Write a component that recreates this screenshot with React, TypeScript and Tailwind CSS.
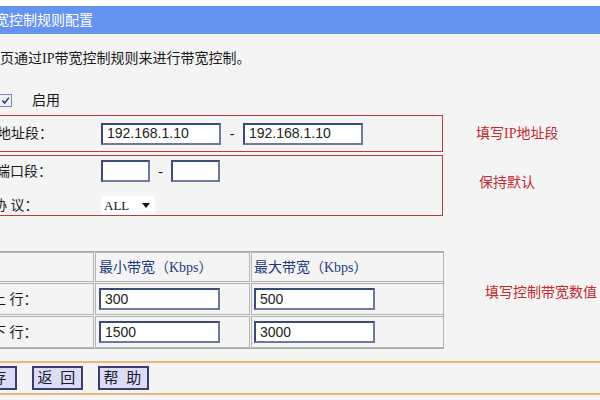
const cjk = "font-['Liberation_Serif','Noto_Sans_CJK_SC',serif]"
const num = "font-['Liberation_Sans','Noto_Sans_CJK_SC',sans-serif]"

function TextBox({ value, className }: { value?: string; className: string }) {
  return (
    <div
      className={`${className} ${num} flex items-center bg-white pl-[4px] text-[14px] text-[#222] border-2 border-t-[#3d4a78] border-l-[#3d4a78] border-b-[#6d7aa0] border-r-[#6d7aa0]`}
    >
      {value}
    </div>
  )
}

function Button({ label, className = '' }: { label: string; className?: string }) {
  return (
    <div
      className={`${className} ${cjk} w-[51px] h-[24px] flex items-center justify-center bg-[#dcdcf6] border-2 border-[#3b3d6c] text-[15px] text-[#1a1a2a] tracking-[2px]`}
    >
      {label}
    </div>
  )
}

export default function App() {
  return (
    <div className={`${cjk} w-[600px] h-[400px] overflow-hidden bg-[#f4f4f4] text-[13px] text-[#1a1a1a]`}>
      <div className="h-[6px] bg-white" />

      {/* Title bar */}
      <div className="h-[28px] bg-[#6594f0] flex items-center">
        <span className="-ml-[19px] text-[14px] text-white whitespace-nowrap">带宽控制规则配置</span>
      </div>

      {/* Intro line */}
      <div className="h-[20px] mt-[14px] flex items-center">
        <span className="-ml-[14px] text-[14px] whitespace-nowrap">本页通过IP带宽控制规则来进行带宽控制。</span>
      </div>

      {/* Enable */}
      <div className="h-[16px] mt-[24px] flex items-center">
        <div className="-ml-[1px] w-[13px] h-[13px] border border-[#7a8aa8] bg-[#eef2fa] flex items-center justify-center">
          <svg viewBox="0 0 10 10" className="w-[9px] h-[9px]">
            <path d="M1.5 5 L4 7.8 L8.8 1.8" fill="none" stroke="#2c3a6a" strokeWidth="1.6" />
          </svg>
        </div>
        <span className="ml-[20px] text-[14px]">启用</span>
      </div>

      {/* IP range */}
      <div className="mt-[7px] flex items-center">
        <div className="w-[444px] h-[37px] -ml-[1px] border border-[#c0393f] flex items-center">
          <span className="-ml-[3px] w-[104px] text-[14px] whitespace-nowrap">地址段：</span>
          <TextBox value="192.168.1.10" className="w-[120px] h-[22px]" />
          <span className="w-[22px] text-center text-[14px]">-</span>
          <TextBox value="192.168.1.10" className="w-[120px] h-[22px]" />
        </div>
        <span className="ml-[33px] text-[14px] text-[#c4282f] whitespace-nowrap">填写IP地址段</span>
      </div>

      {/* Port / protocol */}
      <div className="mt-[3px] flex items-start">
        <div className="w-[444px] h-[61px] -ml-[1px] border border-[#c0393f] flex flex-col">
          <div className="h-[22px] mt-[4px] flex items-center">
            <span className="-ml-[4px] w-[105px] text-[14px] whitespace-nowrap">端口段：</span>
            <TextBox className="w-[49px] h-[22px]" />
            <span className="w-[21px] text-center text-[14px]">-</span>
            <TextBox className="w-[49px] h-[22px]" />
          </div>
          <div className="h-[19px] mt-[14px] flex items-center">
            <span className="-ml-[7px] w-[108px] text-[14px] whitespace-nowrap">协 议：</span>
            <div className="w-[54px] h-[19px] bg-white flex items-center justify-between pl-[3px] pr-[5px]">
              <span className="text-[13px] text-[#111]">ALL</span>
              <svg viewBox="0 0 8 5" className="w-[8px] h-[5px]">
                <path d="M0 0 H8 L4 5 Z" fill="#111" />
              </svg>
            </div>
          </div>
        </div>
        <span className="ml-[36px] mt-[17px] text-[14px] text-[#c4282f] whitespace-nowrap">保持默认</span>
      </div>

      {/* Bandwidth table */}
      <div className="mt-[35px] flex items-center">
        <div className="-ml-[20px] w-[464px] border border-[#a8a8a8] border-r-[#9a9a9a] grid grid-cols-[113px_155px_193px] gap-[1px] bg-[#f4f4f4]">
          <div className="h-[30px] border border-[#b4b4b4]" />
          <div className="h-[30px] border border-[#b4b4b4] flex items-center pl-[3px] text-[14px] text-[#1f3a7e] whitespace-nowrap">
            最小带宽（Kbps）
          </div>
          <div className="h-[30px] border border-[#b4b4b4] flex items-center pl-[2px] text-[14px] text-[#1f3a7e] whitespace-nowrap">
            最大带宽（Kbps）
          </div>

          <div className="h-[32px] border border-[#b4b4b4] flex items-center pl-[10px] text-[14px] whitespace-nowrap">上 行：</div>
          <div className="h-[32px] border border-[#b4b4b4] flex items-center pl-[3px]">
            <TextBox value="300" className="w-[121px] h-[22px]" />
          </div>
          <div className="h-[32px] border border-[#b4b4b4] flex items-center pl-[2px]">
            <TextBox value="500" className="w-[121px] h-[22px]" />
          </div>

          <div className="h-[32px] border border-[#b4b4b4] flex items-center pl-[10px] text-[14px] whitespace-nowrap">下 行：</div>
          <div className="h-[32px] border border-[#b4b4b4] flex items-center pl-[3px]">
            <TextBox value="1500" className="w-[121px] h-[22px]" />
          </div>
          <div className="h-[32px] border border-[#b4b4b4] flex items-center pl-[2px]">
            <TextBox value="3000" className="w-[121px] h-[22px]" />
          </div>
        </div>
        <span className="ml-[41px] -mt-[16px] text-[14px] text-[#c4282f] whitespace-nowrap">填写控制带宽数值</span>
      </div>

      {/* Footer buttons */}
      <div className="mt-[12px] h-[2px] bg-[#eab878]" />
      <div className="h-[30px] flex items-center gap-[15px]">
        <Button label="保存" className="-ml-[34px]" />
        <Button label="返 回" />
        <Button label="帮 助" />
      </div>
      <div className="h-[2px] bg-[#eab878]" />
    </div>
  )
}
